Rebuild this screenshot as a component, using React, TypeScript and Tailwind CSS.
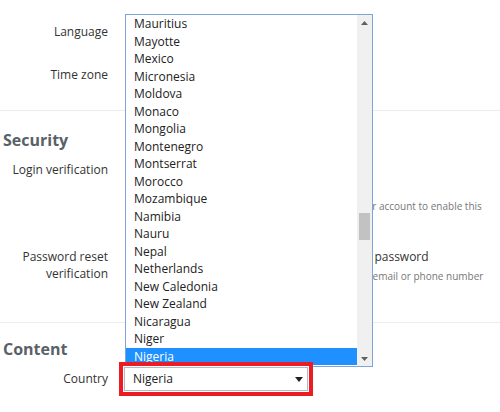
import React from "react";

const countries = [
  "Mauritius", "Mayotte", "Mexico", "Micronesia", "Moldova", "Monaco", "Mongolia",
  "Montenegro", "Montserrat", "Morocco", "Mozambique", "Namibia", "Nauru", "Nepal",
  "Netherlands", "New Caledonia", "New Zealand", "Nicaragua", "Niger", "Nigeria",
];

function Arrow({ up }: { up?: boolean }) {
  return (
    <svg width="7" height="4" viewBox="0 0 7 4" className="fill-[#606060]">
      <path d={up ? "M0 4L3.5 0L7 4z" : "M0 0L3.5 4L7 0z"} />
    </svg>
  );
}

function SelectBox({ value }: { value: string }) {
  return (
    <div className="flex h-6 w-[184px] items-center justify-between border border-[#b9b9c4] bg-white pl-2 pr-1 text-[12px] text-[#222]">
      <span>{value}</span>
      <svg width="8" height="5" viewBox="0 0 8 5" className="fill-[#222]">
        <path d="M0 0L4 5L8 0z" />
      </svg>
    </div>
  );
}

function CountryList() {
  return (
    <div className="absolute left-[125px] top-[14px] z-10 flex h-[353px] w-[248px] border border-[#7ea4d8] bg-white">
      <ul className="flex-1 text-[12px] text-[#222]">
        {countries.map((c) => (
          <li
            key={c}
            className={
              c === "Nigeria"
                ? "h-[17.5px] bg-[#1e90ff] pl-2 leading-[17.5px] text-white"
                : "h-[17.5px] pl-2 leading-[17.5px]"
            }
          >
            {c}
          </li>
        ))}
      </ul>
      <div className="flex w-[15px] flex-col items-center bg-[#f0f0f0]">
        <div className="flex h-[15px] items-center justify-center">
          <Arrow up />
        </div>
        <div className="mt-[183px] h-[27px] w-[11px] bg-[#c2c2c2]" />
        <div className="flex-1" />
        <div className="flex h-[15px] items-center justify-center">
          <Arrow />
        </div>
      </div>
    </div>
  );
}

export default function App() {
  return (
    <div className="relative h-[412px] w-[500px] overflow-hidden bg-white font-['Open_Sans',sans-serif] text-[12px] text-[#333]">
      <section className="border-b border-[#e8edf0] pt-3 pb-[15px]">
        <div className="grid h-10 grid-cols-[108px_1fr] items-center gap-4">
          <span className="text-right">Language</span>
        </div>
        <div className="mt-[3px] grid h-10 grid-cols-[108px_1fr] items-center gap-4">
          <span className="text-right">Time zone</span>
        </div>
      </section>

      <section className="border-b border-[#e8edf0] pt-[17px] pb-[37px]">
        <h2 className="pl-[3px] text-[16px] leading-6 font-bold text-[#596168]">Security</h2>
        <div className="mt-[9px] grid grid-cols-[108px_1fr] items-start gap-4 leading-[17px]">
          <span className="text-right">Login verification</span>
          <div className="flex flex-col pt-[37px]">
            <span className="ml-[52px] whitespace-nowrap text-[10px] text-[#777]">
              You'll need to add a phone number to your account to enable this
            </span>
          </div>
        </div>
        <div className="mt-[33px] grid grid-cols-[108px_1fr] items-start gap-4 leading-[17px]">
          <span className="text-right">
            Password reset
            <br />
            verification
          </span>
          <div className="flex flex-col">
            <span className="ml-[16px] whitespace-nowrap">Require personal information to reset my password</span>
            <span className="mt-[3px] ml-[102px] whitespace-nowrap text-[10px] text-[#777]">
              You'll be asked to confirm your email or phone number
            </span>
          </div>
        </div>
      </section>

      <section className="pt-[14px]">
        <h2 className="pl-[3px] text-[16px] leading-6 font-bold text-[#596168]">Content</h2>
        <div className="mt-px grid grid-cols-[108px_1fr] items-center gap-4">
          <span className="text-right">Country</span>
          <div className="relative z-20 -ml-[5px] w-fit border-4 border-[#ec1c24] bg-white p-px">
            <SelectBox value="Nigeria" />
          </div>
        </div>
      </section>

      <CountryList />
    </div>
  );
}
